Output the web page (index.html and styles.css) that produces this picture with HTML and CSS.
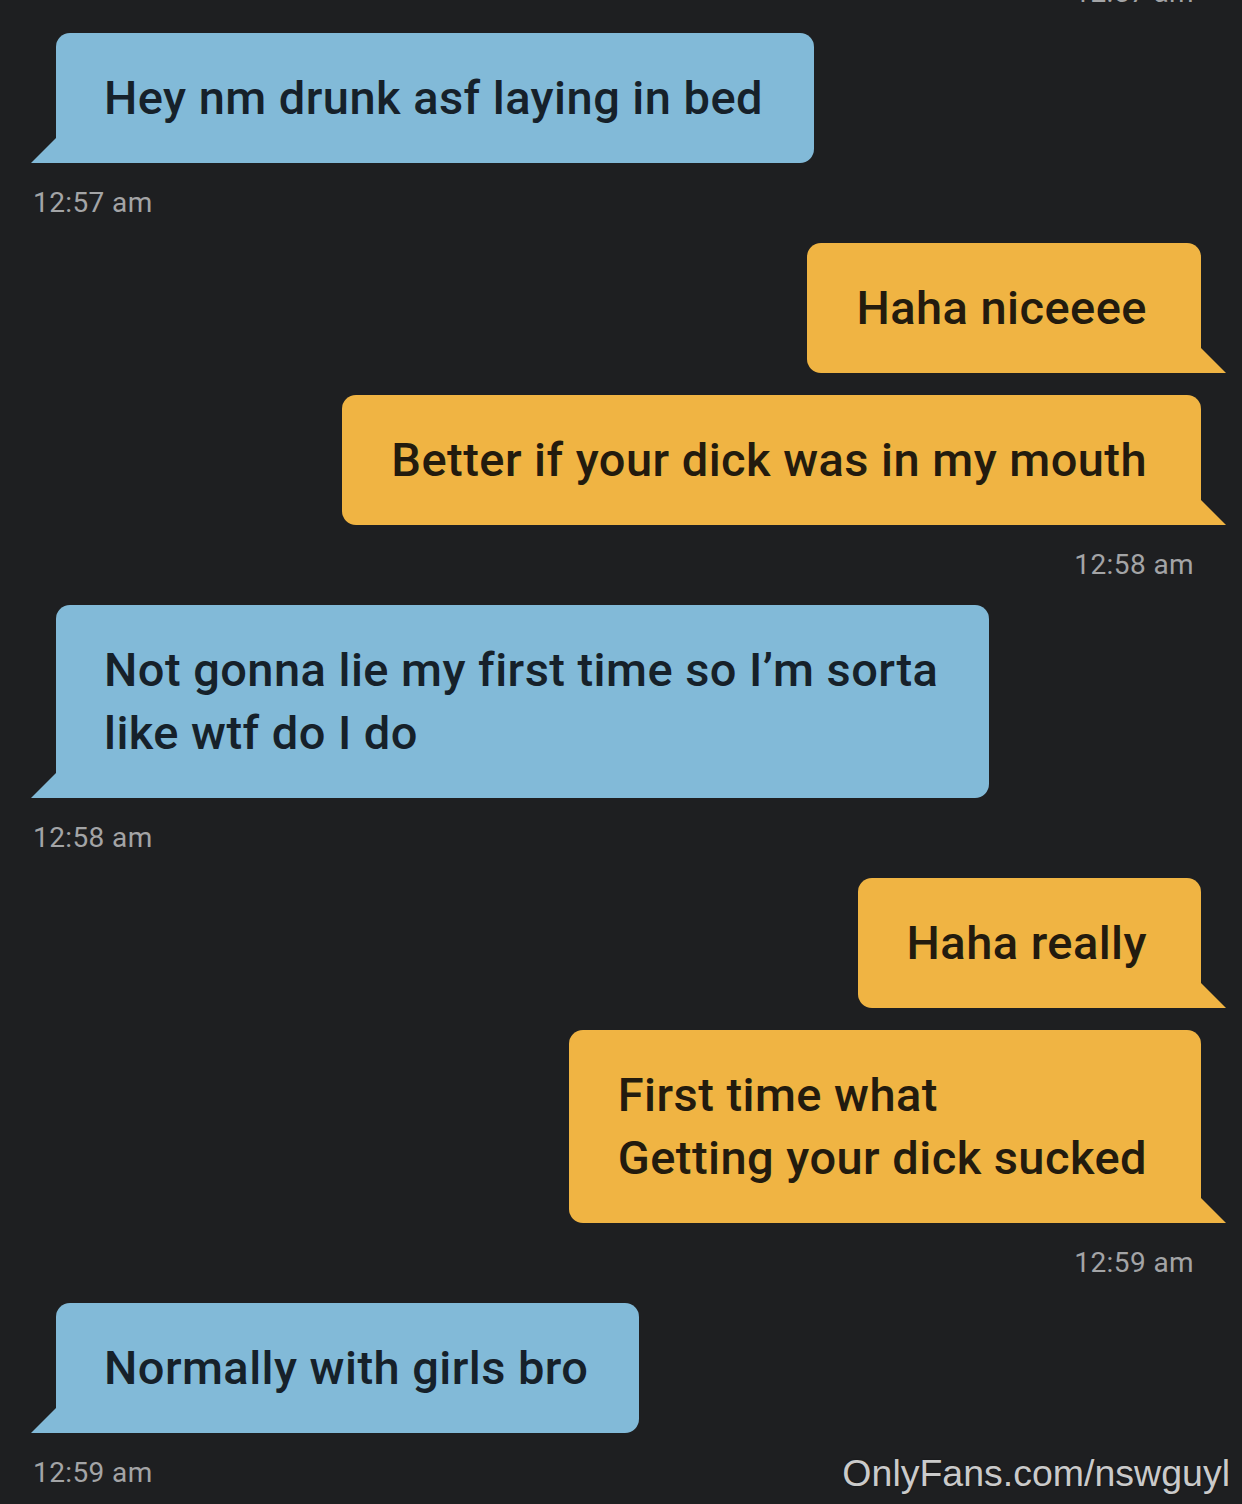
FILE: index.html
```html
<!DOCTYPE html>
<html>
<head>
<meta charset="utf-8">
<link rel="stylesheet" href="styles.css">
</head>
<body>
<div class="chat">
  <div class="ts ts-right ts-top">12:57 am</div>
  <div class="bubble in">Hey nm drunk asf laying in bed</div>
  <div class="ts ts-left">12:57 am</div>
  <div class="bubble out">Haha niceeee</div>
  <div class="bubble out next">Better if your dick was in my mouth</div>
  <div class="ts ts-right">12:58 am</div>
  <div class="bubble in">Not gonna lie my first time so I’m sorta<br>like wtf do I do</div>
  <div class="ts ts-left">12:58 am</div>
  <div class="bubble out">Haha really</div>
  <div class="bubble out next">First time what<br>Getting your dick sucked</div>
  <div class="ts ts-right">12:59 am</div>
  <div class="bubble in">Normally with girls bro</div>
  <div class="ts ts-left">12:59 am</div>
</div>
<div class="watermark">OnlyFans.com/nswguyl</div>
</body>
</html>
```

FILE: styles.css
```css
html, body {
  margin: 0;
  padding: 0;
  background: #1e1f21;
  height: 1504px;
  overflow: hidden;
}
body {
  position: relative;
  font-family: Roboto, "Noto Sans", sans-serif;
}
.chat {
  display: flex;
  flex-direction: column;
  padding: 0 41px 0 56px;
}
.bubble {
  position: relative;
  font-size: 47px;
  font-weight: 500;
  line-height: 63px;
  padding: 33px 51px 34px 48px;
  border-radius: 14px;
  letter-spacing: 0.45px;
}
.bubble::after {
  content: "";
  position: absolute;
  bottom: 0;
  width: 26px;
  height: 26px;
}
.in {
  align-self: flex-start;
  background: #82bad8;
  color: #16212a;
  border-bottom-left-radius: 0;
}
.in::after {
  left: -25px;
  background: #82bad8;
  clip-path: polygon(100% 0, 100% 100%, 0 100%);
}
.out {
  align-self: flex-end;
  background: #f0b443;
  color: #231b0e;
  border-bottom-right-radius: 0;
  padding-left: 49px;
  padding-right: 54px;
}
.out::after {
  right: -25px;
  background: #f0b443;
  clip-path: polygon(0 0, 100% 100%, 0 100%);
}
.next {
  margin-top: 22px;
}
.ts {
  font-size: 28px;
  line-height: 40px;
  height: 40px;
  color: #a3a4a6;
  margin: 20px 0;
  letter-spacing: 0.4px;
}
.ts-left {
  align-self: flex-start;
  margin-left: -23px;
}
.ts-right {
  align-self: flex-end;
  margin-right: 7px;
}
.ts-top {
  margin-top: -27px;
}
.watermark {
  position: absolute;
  right: 12px;
  bottom: 9px;
  font-family: "Liberation Sans", Arial, sans-serif;
  font-size: 37.5px;
  color: #cacaca;
  text-shadow: 0 0 2px rgba(0,0,0,0.4);
}
```
